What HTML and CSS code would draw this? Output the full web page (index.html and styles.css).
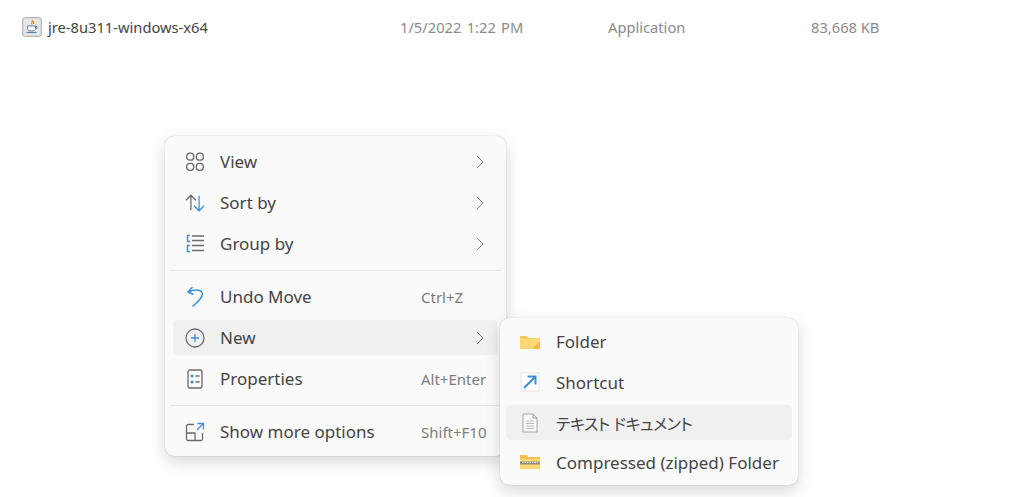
FILE: index.html
```html
<!DOCTYPE html>
<html lang="en">
<head>
    <meta charset="UTF-8">
    <meta name="viewport" content="width=device-width, initial-scale=1.0">
    <title>Context menu</title>
    <link rel="stylesheet" href="styles.css">
</head>
<body>

    <!-- File row -->
    <div class="file-row">
        <div class="file-name">
            <svg class="file-icon" width="20" height="20" viewBox="0 0 20 20">
                <rect x="0.7" y="0.7" width="18.6" height="18.6" rx="2.5" fill="#e6e6e6" stroke="#a5a5a5"/>
                <path d="M10 3c1.5 1.5-1.5 2.5 0 4.5M11.5 4c.8 1-.6 1.8 0 3" fill="none" stroke="#d98a2b" stroke-width="1.2"/>
                <path d="M5.5 9h8v2.500c0 1.700-1.500 2.500-4 2.500s-4-.8-4-2.500zM13.500 9.500h1.500v2h-1.500" fill="#fff" stroke="#5a7fa8"/>
                <path d="M4.500 15.500h10" stroke="#5a7fa8" stroke-width="1.2"/>
            </svg>
            <span>jre-8u311-windows-x64</span>
        </div>
        <span class="date">1/5/2022 1:22 PM</span>
        <span>Application</span>
        <span>83,668 KB</span>
    </div>

    <!-- Main context menu -->
    <div class="menu main-menu">
        <div class="item">
            <svg class="icon" viewBox="0 0 20 20" fill="none" stroke="#6b6b6b" stroke-width="1.3">
                <rect x="1.7" y="1.2" width="7" height="7" rx="3"/>
                <rect x="11.3" y="1.2" width="7" height="7" rx="3"/>
                <rect x="1.7" y="11.3" width="7" height="7" rx="3"/>
                <rect x="11.3" y="11.3" width="7" height="7" rx="3"/>
            </svg>
            <span class="label">View</span>
            <svg class="chevron" viewBox="0 0 8 14"><path d="M1 1l6 6-6 6" fill="none" stroke="#808080" stroke-width="1"/></svg>
        </div>
        <div class="item">
            <svg class="icon" viewBox="0 0 22 20" fill="none" stroke-width="1.4">
                <path d="M1 7l5.500-5.500L12 7M6.500 2v16" stroke="#6b6b6b"/>
                <path d="M10 13l5.500 5.500L21 13M15.500 18V2" stroke="#3a8fd8"/>
            </svg>
            <span class="label">Sort by</span>
            <svg class="chevron" viewBox="0 0 8 14"><path d="M1 1l6 6-6 6" fill="none" stroke="#808080" stroke-width="1"/></svg>
        </div>
        <div class="item">
            <svg class="icon" viewBox="0 0 20 20" fill="none" stroke-width="1.4">
                <path d="M5 1.500H2.500v6H5M5 11.500H2.500v6H5" stroke="#3a8fd8"/>
                <path d="M7 2h12M7 6.500h12M7 11.500h12M7 16.500h12" stroke="#6b6b6b"/>
            </svg>
            <span class="label">Group by</span>
            <svg class="chevron" viewBox="0 0 8 14"><path d="M1 1l6 6-6 6" fill="none" stroke="#808080" stroke-width="1"/></svg>
        </div>

        <div class="divider"></div>

        <div class="item">
            <svg class="icon" viewBox="0 0 20 20" fill="none" stroke="#3a8fd8" stroke-width="1.5">
                <path d="M7.500 0L3 5l5.500 2.500"/>
                <path d="M3.500 5C8 2.500 15 2 17 5.500c2 3.500-3 8.500-9.500 14"/>
            </svg>
            <span class="label">Undo Move</span>
            <span class="shortcut">Ctrl+Z</span>
        </div>
        <div class="item active">
            <svg class="icon" viewBox="0 0 20 20" fill="none" stroke-width="1.3">
                <circle cx="10" cy="10" r="9" stroke="#6b6b6b"/>
                <path d="M10 6v8M6 10h8" stroke="#3a8fd8"/>
            </svg>
            <span class="label">New</span>
            <svg class="chevron" viewBox="0 0 8 14"><path d="M1 1l6 6-6 6" fill="none" stroke="#808080" stroke-width="1"/></svg>
        </div>
        <div class="item">
            <svg class="icon" viewBox="0 0 20 20" fill="none" stroke-width="1.3">
                <rect x="3" y="1" width="14" height="18" rx="2" stroke="#6b6b6b"/>
                <circle cx="7" cy="7" r="1.600" fill="#3a8fd8"/>
                <circle cx="7" cy="13" r="1.600" fill="#3a8fd8"/>
                <path d="M10.500 7h4M10.500 13h4" stroke="#6b6b6b"/>
            </svg>
            <span class="label">Properties</span>
            <span class="shortcut">Alt+Enter</span>
        </div>

        <div class="divider"></div>

        <div class="item">
            <svg class="icon" viewBox="0 0 20 20" fill="none" stroke-width="1.3">
                <path d="M9 2.500H3a1.500 1.500 0 0 0-1.500 1.500v13A1.500 1.500 0 0 0 3 18.500h13a1.500 1.500 0 0 0 1.500-1.500v-6M1.500 11h8.500v7.500" stroke="#6b6b6b"/>
                <path d="M12.500 1.500h6v6M18.500 1.500L12 8" stroke="#3a8fd8"/>
            </svg>
            <span class="label">Show more options</span>
            <span class="shortcut">Shift+F10</span>
        </div>
    </div>

    <!-- New submenu -->
    <div class="menu sub-menu">
        <div class="item">
            <svg class="icon" viewBox="0 0 20 14">
                <path d="M0 1h7l2 2h11v11H0z" fill="#f7c95c"/>
                <path d="M0 3.500h20V14H0z" fill="#fbd876"/>
                <path d="M12 14l8-8v8z" fill="#eebb4d"/>
            </svg>
            <span class="label">Folder</span>
        </div>
        <div class="item">
            <svg class="icon" viewBox="0 0 20 20">
                <rect x="1" y="1" width="18" height="18" fill="#fff" stroke="#dcdcdc" stroke-width="0.8"/>
                <path d="M4 16L15 5M7.500 4.500h8v8" fill="none" stroke="#3a8fd8" stroke-width="2"/>
            </svg>
            <span class="label">Shortcut</span>
        </div>
        <div class="item active">
            <svg class="icon" viewBox="0 0 20 20" fill="none" stroke="#9a9a9a" stroke-width="0.9">
                <path d="M3 1h10l4 4v14H3zM13 1v4h4" fill="#fafafa"/>
                <path d="M6 8h8M6 10.500h8M6 13h8M6 15.500h8" stroke="#b5b5b5"/>
            </svg>
            <span class="label ja">テキスト ドキュメント</span>
        </div>
        <div class="item">
            <svg class="icon" viewBox="0 0 20 14">
                <path d="M0 0h7l1 2h12v12H0z" fill="#f3c14f"/>
                <path d="M0 4h20v10H0z" fill="#fbd876"/>
                <path d="M0 6.500h20v3H0z" fill="#8a8f80"/>
                <path d="M2 7.500h16" stroke="#e8e8e8" stroke-dasharray="1.500 1"/>
            </svg>
            <span class="label">Compressed (zipped) Folder</span>
        </div>
    </div>

</body>
</html>
```

FILE: styles.css
```css
body {
    font-family: "Noto Sans", "Noto Sans CJK JP", sans-serif;
    background-color: #fff;
    color: #444;
    margin: 0;
    height: 497px;
    overflow: hidden;
}

/* File row */
.file-row {
    display: grid;
    grid-template-columns: 378px 208px 203px 1fr;
    align-items: center;
    padding: 17px 0 0 22px;
    font-size: 14.7px;
    color: #8a8a8a;
}

.file-name {
    display: flex;
    align-items: center;
    gap: 6px;
    color: #444;
}

.date {
    word-spacing: 1.5px;
}

/* Menus */
.menu {
    position: absolute;
    background: #fafafa;
    border-radius: 9px;
    box-shadow: 0 0 1px rgba(0, 0, 0, 0.3), 0 6px 16px rgba(0, 0, 0, 0.16);
    box-sizing: border-box;
}

.main-menu {
    left: 165px;
    top: 136px;
    width: 341px;
    height: 320px;
    padding: 5px 8px;
}

.sub-menu {
    left: 500px;
    top: 318px;
    width: 298px;
    height: 167px;
    padding: 4px 6px;
}

.item {
    display: flex;
    align-items: center;
    height: 41px;
    padding: 0 12px;
    border-radius: 5px;
    font-size: 17px;
    color: #444;
}

.sub-menu .item {
    padding: 0 14px;
    height: 40px;
}

.sub-menu .item:first-child {
    height: 39px;
}

.sub-menu .item:last-child {
    height: 38px;
}

.item .icon {
    width: 20px;
    height: 20px;
    flex-shrink: 0;
    margin-right: 15px;
}

.sub-menu .item .icon {
    margin-right: 16px;
}

.item.active {
    background: #f0f0f0;
    height: 35px;
    margin: 3px 0;
}

.sub-menu .item:first-child + .item {
    margin-top: 1px;
}

.label {
    flex: 1;
    white-space: nowrap;
}

/* katakana is set tight in the original */
.ja {
    font-size: 16px;
    font-feature-settings: "palt";
    letter-spacing: -0.5px;
}

.shortcut {
    font-size: 15px;
    color: #7c7c7c;
    width: 65px;
    flex-shrink: 0;
    white-space: nowrap;
}

.chevron {
    width: 8px;
    height: 14px;
    margin-right: 2px;
}

.divider {
    border-top: 1px solid #e6e6e6;
    margin: 6px -3px 5px -3px;
}
```
